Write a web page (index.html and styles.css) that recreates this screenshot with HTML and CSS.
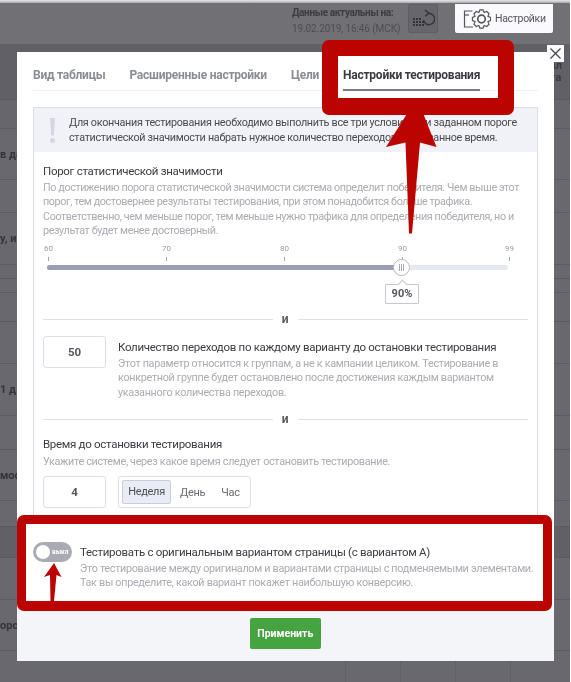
FILE: index.html
```html
<!DOCTYPE html>
<html lang="ru">
<head>
<meta charset="utf-8">
<title>Настройки тестирования</title>
<link rel="stylesheet" href="styles.css">
</head>
<body>
<div class="page">
  <div class="app">
    <header class="topbar">
      <div class="freshness">
        <div class="freshness-label">Данные актуальны на:</div>
        <div class="freshness-date">19.02.2019, 16:46 (МСК)</div>
      </div>
      <div class="refresh">
        <svg width="24" height="24" viewBox="0 0 24 24" fill="none">
          <g fill="#333338"><rect x="2" y="11" width="2" height="2"/><rect x="5" y="11" width="2" height="2"/><rect x="8" y="11" width="2" height="2"/><rect x="2" y="14" width="2" height="2"/><rect x="5" y="14" width="2" height="2"/><rect x="8" y="14" width="2" height="2"/><rect x="11" y="14" width="2" height="2"/><rect x="2" y="17" width="2" height="2"/><rect x="5" y="17" width="2" height="2"/><rect x="8" y="17" width="2" height="2"/><rect x="11" y="17" width="2" height="2"/></g>
          <path d="M17.500 6.500a5.600 5.600 0 1 1-5 6.500" stroke="#333338" stroke-width="1.400"/>
          <path d="M14 3l3.800 3.300-3.600 3" stroke="#333338" stroke-width="1.400"/>
        </svg>
      </div>
      <div class="settings-btn">
        <svg class="gear" width="28" height="22" viewBox="0 0 28 22" fill="none" stroke="#55565e" stroke-width="1.200">
          <path d="M9.500 3H1.500v16H10"/>
          <path d="M1.500 7H6"/>
          <path transform="translate(18.500 11)" d="M-1.600-9.060H1.600L2.680-6.470 5.280-7.540 7.540-5.280 6.470-2.680 9.060-1.600V1.600L6.470 2.680 7.540 5.280 5.280 7.540 2.680 6.470 1.600 9.060H-1.600L-2.680 6.470-5.280 7.540-7.540 5.280-6.470 2.680-9.060 1.600V-1.600L-6.470-2.680-7.540-5.280-5.280-7.540-2.680-6.470Z"/>
          <circle cx="18.500" cy="11" r="3.800" stroke-width="1.700"/>
        </svg>
        <span>Настройки</span>
      </div>
    </header>
    <div class="subbar"><span class="subbar-cell">ал<br>та</span></div>
    <div class="rows">
      <div class="row"></div>
      <div class="row">в да</div>
      <div class="row"></div>
      <div class="row">у, и</div>
      <div class="row"></div>
      <div class="row"></div>
      <div class="row"></div>
      <div class="row"></div>
      <div class="row">1 д</div>
      <div class="row"></div>
      <div class="row">мост</div>
      <div class="row"></div>
      <div class="row row-dark"></div>
      <div class="row"></div>
      <div class="row">оро</div>
      <div class="row row-last"><i></i><i></i><i></i><i></i></div>
    </div>
  </div>
  <div class="edge-top"></div>
  <div class="edge-right"></div>

  <section class="modal">
    <button class="close" aria-label="Закрыть">
      <svg width="13" height="13" viewBox="0 0 13 13" fill="none" stroke="#4a4b52" stroke-width="1.400"><path d="M1.500 1.500l10 10M11.500 1.500l-10 10"/></svg>
    </button>
    <nav class="tabs">
      <a class="tab">Вид таблицы</a>
      <a class="tab">Расширенные настройки</a>
      <a class="tab">Цели</a>
      <a class="tab tab-active">Настройки тестирования</a>
    </nav>
    <div class="panel">
      <div class="alert">
        <span class="alert-mark"><i class="bar"></i><i class="dot"></i></span>
        <p>Для окончания тестирования необходимо выполнить все три условия: при заданном пороге статистической значимости набрать нужное количество переходов за указанное время.</p>
      </div>
      <div class="panel-body">
        <h3 class="title">Порог статистической значимости</h3>
        <p class="desc desc-threshold">По достижению порога статистической значимости система определит победителя. Чем выше этот порог, тем достовернее результаты тестирования, при этом понадобится больше трафика. Соответственно, чем меньше порог, тем меньше нужно трафика для определения победителя, но и результат будет менее достоверный.</p>
        <div class="ticks">
          <div class="tick">60</div>
          <div class="tick">70</div>
          <div class="tick">80</div>
          <div class="tick">90</div>
          <div class="tick">99</div>
        </div>
        <div class="track">
          <div class="track-fill" style="width:77%"></div>
          <div class="thumb" style="left:77%"><span class="grip"></span></div>
          <div class="bubble" style="left:77%">90%</div>
        </div>
        <div class="divider divider-first"><span>и</span></div>
        <div class="clicks">
          <div class="field">50</div>
          <div class="clicks-text">
            <h3 class="title">Количество переходов по каждому варианту до остановки тестирования</h3>
            <p class="desc">Этот параметр относится к группам, а не к кампании целиком. Тестирование в конкретной группе будет остановлено после достижения каждым вариантом указанного количества переходов.</p>
          </div>
        </div>
        <div class="divider divider-second"><span>и</span></div>
        <h3 class="title">Время до остановки тестирования</h3>
        <p class="desc desc-time">Укажите системе, через какое время следует остановить тестирование.</p>
        <div class="time-row">
          <div class="field">4</div>
          <div class="segments">
            <span class="segment segment-active">Неделя</span>
            <span class="segment segment-day">День</span>
            <span class="segment segment-hour">Час</span>
          </div>
        </div>
      </div>
    </div>
    <div class="original">
      <div class="toggle"><span class="knob"></span><span class="toggle-label">выкл</span></div>
      <div class="original-text">
        <h3 class="title">Тестировать с оригинальным вариантом страницы (с вариантом А)</h3>
        <p class="desc">Это тестирование между оригиналом и вариантами страницы с подменяемыми элементами. Так вы определите, какой вариант покажет наибольшую конверсию.</p>
      </div>
    </div>
    <footer class="modal-footer"><button class="apply">Применить</button></footer>
  </section>

  <div class="mark mark-tab"></div>
  <div class="mark mark-toggle"></div>
  <svg class="arrows" width="571" height="682" viewBox="0 0 571 682">
    <path fill="#bb0400" d="M417 98L436.500 147L420 142.500L412 233.500L409 233.500L405.500 142.500L386 147Z"/>
    <path fill="#bb0400" d="M54 563L61.500 577L56.500 575L54 601L50.500 601L50 575L44 577Z"/>
  </svg>
</div>
</body>
</html>
```
FILE: styles.css
```css
* { box-sizing: border-box; }
html, body { margin: 0; padding: 0; }
body { font-family: Roboto, "Liberation Sans", sans-serif; background: #fff; }
.page { position: relative; width: 571px; height: 682px; overflow: hidden; background: #67676d; filter: blur(0.3px); }

.app { display: flex; flex-direction: column; height: 682px; color: #2f2f34; }
.topbar { display: flex; align-items: flex-start; height: 44px; padding: 4px 0 0 292px; background: #707075; }
.freshness { width: 116px; padding-top: 1px; font-size: 10px; line-height: 16px; white-space: nowrap; }
.freshness-label { font-weight: 700; color: #3c3c42; letter-spacing: -0.350px; }
.freshness-date { color: #4c4c52; letter-spacing: -0.100px; }
.refresh { display: flex; align-items: center; justify-content: center; width: 30px; height: 29px; background: #66666c; border: 1px solid #5d5d63; border-radius: 2px; }
.settings-btn { display: flex; align-items: center; gap: 4px; width: 98px; height: 29px; margin-left: 17px; padding-left: 8px; background: #fafafc; border-radius: 0 0 2px 2px; font-size: 10.500px; letter-spacing: -0.300px; color: #55565e; }
.subbar { display: flex; justify-content: flex-end; height: 56px; background: #606066; padding: 16px 9px 0 0; border-bottom: 1px solid #58585e; }
.subbar-cell { font-size: 11px; line-height: 12px; font-weight: 700; color: #3b3b40; }
.rows { display: grid; flex: 1; grid-template-rows: 29px 51px 33px 52px 14px 14px 29px 42px 52px 34px 51px 26px 31px 42px 51px 1fr; background: #68686e; }
.row { display: flex; align-items: center; border-bottom: 1px solid #5b5b61; font-size: 11px; font-weight: 700; color: #333338; white-space: nowrap; }
.row:nth-child(1) { background: #66666c; }
.row-dark { background: #606066; }
.row-last { border-bottom: 0; padding-left: 345px; align-items: stretch; }
.row-last i { width: 55px; border-left: 1px solid #5f5f65; }
.edge-top { position: absolute; left: 0; top: 0; width: 571px; height: 3px; background: linear-gradient(#e8e8ea, #a9a9ad); }
.edge-right { position: absolute; right: 0; top: 0; width: 1.500px; height: 682px; background: #fff; }

.modal { position: absolute; left: 17px; top: 52px; width: 536.500px; height: 609px; display: flex; flex-direction: column; background: #fff; }
.close { position: absolute; right: -10px; top: -7px; display: flex; align-items: center; justify-content: center; width: 17px; height: 17px; padding: 0; background: #fbfbfd; border: 0; }
.tabs { display: flex; gap: 24px; height: 39px; margin: 0 16px; padding-top: 15px; border-bottom: 1px solid #f0f1f4; }
.tab { font-size: 12px; letter-spacing: -0.250px; line-height: 16px; font-weight: 700; color: #8a8c95; white-space: nowrap; }
.tab-active { height: 24px; color: #3a3b42; border-bottom: 2px solid #767b8b; }
.panel { height: 409px; margin: 16px 16px 0; border: 1px solid #dcdfe7; }
.alert { display: flex; align-items: center; gap: 13px; height: 44px; padding-left: 15px; background: #f0f2f8; }
.alert p { margin: 0; width: 450px; font-size: 10.800px; letter-spacing: -0.300px; line-height: 15px; color: #4a4b52; }
.alert-mark { display: flex; flex-direction: column; align-items: center; gap: 2px; width: 7px; }
.bar { display: block; width: 5px; height: 18px; background: #d3d7e2; clip-path: polygon(0 0, 100% 0, 75% 100%, 25% 100%); }
.dot { display: block; width: 5px; height: 5px; border-radius: 50%; background: #d3d7e2; }
.panel-body { padding: 12px 9px 0; }
.title { margin: 0; font-size: 11.500px; letter-spacing: -0.300px; line-height: 14px; font-weight: 400; color: #3c3d44; white-space: nowrap; }
.desc { margin: 3px 0 0; font-size: 10.800px; letter-spacing: -0.300px; line-height: 14.300px; color: #aaacb2; }
.desc-threshold { letter-spacing: -0.400px; }
.desc-time { margin-top: 4px; }

.ticks { display: flex; margin: 6px 0 0 -1.500px; }
.tick { flex: none; width: 14px; height: 17px; margin-right: 104px; font-size: 8px; line-height: 10px; text-align: center; color: #9a9ca4; }
.tick::after { content: ""; display: block; width: 1px; height: 4px; margin: 3px auto 0; background: #a5a7b0; }
.tick:nth-child(4) { margin-right: 93px; }
.tick:nth-child(5) { margin-right: 0; }
.track { position: relative; width: 461px; height: 5px; margin: 4px 0 0 4px; border-radius: 3px; background: #e6e8f1; }
.track-fill { height: 5px; border-radius: 3px 0 0 3px; background: #9a9fb3; }
.thumb { position: absolute; top: -6px; display: flex; align-items: center; justify-content: center; width: 17px; height: 17px; margin-left: -8.500px; background: #fff; border: 1px solid #b5b8c4; border-radius: 50%; }
.grip { width: 5px; height: 7px; border-left: 1px solid #a9abb5; border-right: 1px solid #a9abb5; background: linear-gradient(#a9abb5, #a9abb5) center / 1px 100% no-repeat; }
.bubble { position: absolute; top: 19px; width: 34px; height: 20px; margin-left: -17px; background: #fff; border: 1px solid #c6c8d0; border-radius: 1px; font-size: 11px; line-height: 18px; font-weight: 700; text-align: center; color: #55565e; }
.bubble::before { content: ""; position: absolute; left: 13px; top: -4px; width: 6px; height: 6px; background: #fff; border-left: 1px solid #c6c8d0; border-top: 1px solid #c6c8d0; transform: rotate(45deg); }

.divider { display: flex; align-items: center; gap: 9px; height: 14px; font-size: 12px; font-weight: 700; color: #5a5b62; }
.divider::before, .divider::after { content: ""; flex: 1; height: 1px; background: #dfe1e7; }
.divider-first { margin-top: 42px; }
.divider-second { margin: 12px 0 11px; }
.field { flex: none; width: 63px; height: 32px; background: #fff; border: 1px solid #dcdfe7; border-radius: 3px; font-size: 11.500px; line-height: 30px; font-weight: 700; text-align: center; color: #55565e; }
.clicks { display: flex; gap: 12px; margin-top: 10px; }
.clicks-text { padding-top: 4px; }
.time-row { display: flex; gap: 12px; margin-top: 7px; }
.segments { display: flex; align-items: center; width: 133px; height: 32px; padding-left: 3px; border: 1px solid #dcdfe7; border-radius: 3px; font-size: 11px; letter-spacing: -0.300px; color: #6b6c74; }
.segment { line-height: 23px; }
.segment-active { width: 49px; height: 24px; background: #eaecf5; border: 1px solid #c9ccd8; border-radius: 2px; line-height: 22px; text-align: center; color: #4d4e56; }
.segment-day { margin-left: 9px; }
.segment-hour { margin-left: 16px; }

.original { display: flex; gap: 8px; padding: 26px 0 0 16px; height: 74px; }
.toggle { flex: none; display: flex; align-items: center; width: 39px; height: 20px; padding-left: 3px; border-radius: 10px; background: #a9abb4; }
.knob { width: 14px; height: 14px; border-radius: 50%; background: #fff; }
.toggle-label { margin-left: 2px; font-size: 6.500px; font-weight: 700; color: #fff; }
.original-text { width: 456px; padding-top: 3px; }
.modal-footer { display: flex; justify-content: center; flex: 1; margin-top: 21px; padding-top: 7px; background: #f4f5f9; }
.apply { width: 71px; height: 31px; padding: 0; background: #45a340; border: 0; border-radius: 2px; font-family: inherit; font-size: 10.500px; font-weight: 700; color: #fff; }

.mark { position: absolute; background: transparent; border-style: solid; border-color: #bb0400; border-radius: 7px; }
.mark-tab { left: 322px; top: 40px; width: 192px; height: 75px; border-width: 16px 16px 17px 16px; }
.mark-toggle { left: 17px; top: 515px; width: 535px; height: 96px; border-width: 9px 9px 10px 9px; }
.arrows { position: absolute; left: 0; top: 0; pointer-events: none; }
```
